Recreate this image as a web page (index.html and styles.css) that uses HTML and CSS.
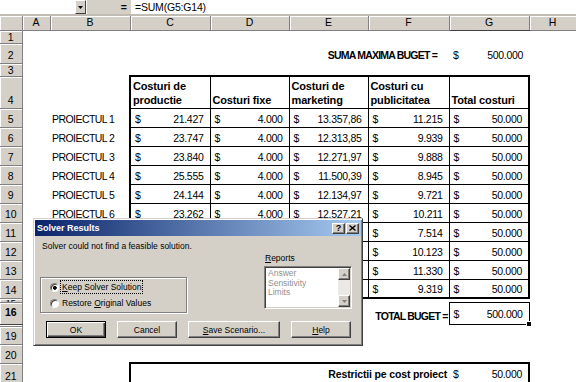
FILE: index.html
```html
<!DOCTYPE html>
<html lang="ro">
  <head>
    <meta charset="UTF-8" />
    <meta name="viewport" content="width=device-width" />
    <title>Buget proiecte - Solver Results</title>
    <link rel="stylesheet" href="styles.css">
  </head>
  <body>
    <!-- formula bar -->
    <div class="fbar">
      <div class="namebox"></div>
      <div class="drop">
        <svg width="5" height="3" viewBox="0 0 5 3"><polygon points="0,0 5,0 2.5,3" fill="#000" /></svg>
      </div>
      <div class="eq">=</div>
      <div class="formula">=SUM(G5:G14)</div>
    </div>

    <table class="sheet">
      <colgroup>
        <col class="w-rh" />
        <col class="w-a" />
        <col class="w-b" />
        <col class="w-c" />
        <col class="w-d" />
        <col class="w-e" />
        <col class="w-f" />
        <col class="w-g" />
        <col class="w-h" />
      </colgroup>
      <tr class="hdr">
        <td class="corner"></td>
        <td class="ch">A</td>
        <td class="ch">B</td>
        <td class="ch">C</td>
        <td class="ch">D</td>
        <td class="ch">E</td>
        <td class="ch">F</td>
        <td class="ch ch-sel">G</td>
        <td class="ch">H</td>
      </tr>
      <tr class="h13"><td class="rh">1</td><td colspan="8"></td></tr>
      <tr class="h20">
        <td class="rh">2</td>
        <td></td><td></td>
        <td colspan="4" class="caps right">SUMA MAXIMA BUGET =</td>
        <td><div class="acc"><span>$</span><span>500.000</span></div></td>
        <td></td>
      </tr>
      <tr class="h13"><td class="rh">3</td><td colspan="8"></td></tr>
      <tr class="h32">
        <td class="rh">4</td>
        <td></td><td></td>
        <td class="colh bt bl">Costuri de productie</td>
        <td class="colh bt">Costuri fixe</td>
        <td class="colh bt">Costuri de marketing</td>
        <td class="colh bt">Costuri cu publicitatea</td>
        <td class="colh bt br">Total costuri</td>
        <td></td>
      </tr>
    </table>

    <!-- rows 5..21 are added by the script below -->
    <script>
      // each project: production, fixed, marketing, publicity, total
      const projects = [
        ["21.427", "4.000", "13.357,86", "11.215", "50.000"],
        ["23.747", "4.000", "12.313,85", "9.939", "50.000"],
        ["23.840", "4.000", "12.271,97", "9.888", "50.000"],
        ["25.555", "4.000", "11.500,39", "8.945", "50.000"],
        ["24.144", "4.000", "12.134,97", "9.721", "50.000"],
        ["23.262", "4.000", "12.527,21", "10.211", "50.000"],
        ["26.113", "4.000", "12.373,00", "7.514", "50.000"],
        ["23.504", "4.000", "12.373,00", "10.123", "50.000"],
        ["22.297", "4.000", "12.373,00", "11.330", "50.000"],
        ["24.308", "4.000", "12.373,00", "9.319", "50.000"],
      ];

      const sheet = document.querySelector(".sheet");

      function acc(value) {
        return `<div class="acc"><span>$</span><span>${value}</span></div>`;
      }

      projects.forEach((row, i) => {
        const tr = document.createElement("tr");
        tr.className = "h19";
        const last = i === projects.length - 1 ? " bb" : "";
        tr.innerHTML = `
          <td class="rh">${i + 5}</td>
          <td></td>
          <td class="name">PROIECTUL ${i + 1}</td>
          <td class="box bl${last}">${acc(row[0])}</td>
          <td class="box${last}">${acc(row[1])}</td>
          <td class="box${last}">${acc(row[2])}</td>
          <td class="box${last}">${acc(row[3])}</td>
          <td class="box br${last}">${acc(row[4])}</td>
          <td></td>
        `;
        sheet.appendChild(tr);
      });

      sheet.insertAdjacentHTML("beforeend", `
        <tr class="h4"><td class="rh"><div class="clip">15</div></td><td colspan="8"></td></tr>
        <tr class="h22">
          <td class="rh rh-sel">16</td>
          <td></td><td></td><td></td><td></td><td></td>
          <td class="caps right tight">TOTAL BUGET =</td>
          <td class="sel"><div class="selwrap">${acc("500.000")}<span class="handle"></span></div></td>
          <td></td>
        </tr>
        <tr class="h2"><td class="rh"></td><td colspan="8"></td></tr>
        <tr class="h18"><td class="rh">19</td><td colspan="8"></td></tr>
        <tr class="h19"><td class="rh">20</td><td colspan="8"></td></tr>
        <tr class="h21">
          <td class="rh">21</td>
          <td></td><td></td>
          <td colspan="4" class="restr right">Restrictii pe cost proiect</td>
          <td class="restr-g">${acc("50.000")}</td>
          <td></td>
        </tr>
      `);
    </script>

    <!-- Solver dialog over the sheet -->
    <div class="dlg">
      <div class="titlebar">
        <span class="ttl">Solver Results</span>
        <span class="tbtn help">?</span>
        <span class="tbtn">
          <svg width="7" height="6" viewBox="0 0 7 6"><path d="M0.5 0.5 L6.5 5.5 M6.5 0.5 L0.5 5.5" stroke="#000" stroke-width="1.4" /></svg>
        </span>
      </div>
      <div class="dbody">
        <div class="msg">Solver could not find a feasible solution.</div>
        <div class="mid">
          <div class="group">
            <div class="opt"><span class="radio on"></span><span class="focus"><u>K</u>eep Solver Solution</span></div>
            <div class="opt"><span class="radio"></span><span>Restore <u>O</u>riginal Values</span></div>
          </div>
          <div class="reports">
            <div class="rlabel"><u>R</u>eports</div>
            <div class="list">
              <div class="items">
                <div>Answer</div>
                <div>Sensitivity</div>
                <div>Limits</div>
              </div>
              <div class="scroll">
                <span class="arr"><svg width="5" height="3" viewBox="0 0 5 3"><polygon points="2.5,0 5,3 0,3" fill="#808080" /></svg></span>
                <span class="arr"><svg width="5" height="3" viewBox="0 0 5 3"><polygon points="0,0 5,0 2.5,3" fill="#808080" /></svg></span>
              </div>
            </div>
          </div>
        </div>
        <div class="btns">
          <button class="btn def">OK</button>
          <button class="btn">Cancel</button>
          <button class="btn wide"><u>S</u>ave Scenario...</button>
          <button class="btn"><u>H</u>elp</button>
        </div>
      </div>
    </div>
  </body>
</html>
```

FILE: styles.css
```css
body {
  margin: 0;
  width: 576px;
  height: 382px;
  overflow: hidden;
  position: relative;
  background: #fff;
  font-family: "Liberation Sans", Arial, sans-serif;
  font-size: 10.5px;
  color: #000;
}

/* formula bar */
.fbar {
  display: flex;
  height: 14px;
  background: #d4d0c8;
  border-bottom: 2px solid #c0bcb4;
}

.namebox {
  width: 75px;
  background: #fff;
}

.drop {
  width: 11px;
  box-sizing: border-box;
  border: 1px solid;
  border-color: #fff #404040 #404040 #fff;
  display: flex;
  align-items: center;
  justify-content: center;
}

.eq {
  width: 45px;
  box-sizing: border-box;
  text-align: right;
  padding-right: 4px;
  font-weight: bold;
  line-height: 14px;
  border-left: 1px solid #fff;
}

.formula {
  flex: 1;
  background: #fff;
  padding-left: 4px;
  line-height: 14px;
  letter-spacing: -0.2px;
}

/* sheet */
.sheet {
  border-collapse: collapse;
  table-layout: fixed;
  width: 576px;
}

.w-rh { width: 22px; }
.w-a { width: 28px; }
.w-b { width: 80px; }
.w-c { width: 80px; }
.w-d { width: 79px; }
.w-e { width: 79px; }
.w-f { width: 81px; }
.w-g { width: 80px; }
.w-h { width: 47px; }

.sheet td {
  padding: 0 0 1px 0;
  white-space: nowrap;
  overflow: hidden;
  vertical-align: bottom;
  line-height: 13px;
  letter-spacing: -0.3px;
}

.hdr { height: 14px; }
.h2 { height: 2px; }
.h4 { height: 4px; }
.h13 { height: 13px; }
.h18 { height: 18px; }
.h19 { height: 19px; }
.h20 { height: 20px; }
.h21 { height: 21px; }
.h22 { height: 22px; }
.h32 { height: 32px; }

.sheet .h13 td {
  line-height: 12px;
  padding: 0;
}

.sheet .h2 td,
.sheet .h4 td {
  line-height: 0;
  padding: 0;
}

.sheet td.corner,
.sheet td.ch,
.sheet td.rh {
  background: #d4d0c8;
  border-right: 1px solid #808080;
  border-bottom: 1px solid #808080;
  box-shadow: inset 1px 1px 0 #fff;
  text-align: center;
  letter-spacing: 0;
}

.sheet td.ch {
  vertical-align: middle;
  padding: 0;
}

.sheet td.ch-sel {
  border-bottom-color: #404040;
}

.sheet td.rh-sel {
  font-weight: bold;
  vertical-align: middle;
  border-bottom: 1px solid #404040;
}

.clip {
  height: 3px;
  line-height: 8px;
  overflow: hidden;
  font-size: 9px;
}

.sheet td.name {
  padding-left: 2px;
  letter-spacing: -0.55px;
}

.right {
  text-align: right;
}

.sheet td.caps {
  font-weight: bold;
  letter-spacing: -0.8px;
  padding-right: 12px;
}

.sheet td.tight {
  padding-right: 1px;
}

.sheet td.colh {
  font-weight: bold;
  font-size: 11px;
  letter-spacing: -0.15px;
  white-space: normal;
  line-height: 14px;
  padding: 0 2px 1px 2px;
  border: 1px solid #000;
}

.sheet td.box {
  border: 1px solid #000;
}

.sheet td.bt { border-top: 2px solid #000; }
.sheet td.bl { border-left: 2px solid #000; }
.sheet td.br { border-right: 2px solid #000; }
.sheet td.bb { border-bottom: 2px solid #000; }

.acc {
  display: flex;
  justify-content: space-between;
  padding: 0 6px 0 4px;
}

.sheet td.sel {
  border: 1px solid #000;
  padding: 0;
  overflow: visible;
}

.selwrap {
  position: relative;
  padding-bottom: 3px;
}

.handle {
  position: absolute;
  right: -3px;
  bottom: -3px;
  width: 4px;
  height: 4px;
  background: #000;
  border: 1px solid #fff;
}

.sheet td.restr {
  border-top: 2px solid #000;
  border-left: 2px solid #000;
  font-weight: bold;
  letter-spacing: -0.15px;
  padding: 0 2px 3px 0;
}

.sheet td.restr-g {
  border-top: 2px solid #000;
  border-right: 2px solid #000;
  padding-bottom: 3px;
}

/* dialog */
.dlg {
  position: absolute;
  left: 33px;
  top: 218px;
  width: 330px;
  height: 128px;
  box-sizing: border-box;
  padding: 1px;
  background: #d4d0c8;
  border: 1px solid;
  border-color: #d4d0c8 #404040 #404040 #d4d0c8;
  box-shadow: inset 1px 1px 0 #fff, inset -1px -1px 0 #808080;
  font-size: 8.5px;
  line-height: 12px;
}

.titlebar {
  display: flex;
  align-items: center;
  height: 16px;
  padding-left: 2px;
  background: linear-gradient(to right, #0a246a, #a6caf0);
}

.ttl {
  flex: 1;
  color: #fff;
  font-weight: bold;
  font-size: 9px;
}

.tbtn {
  width: 13px;
  height: 11px;
  box-sizing: border-box;
  background: #d4d0c8;
  border: 1px solid;
  border-color: #fff #404040 #404040 #fff;
  box-shadow: inset -1px -1px 0 #808080;
  display: flex;
  align-items: center;
  justify-content: center;
  margin-right: 2px;
}

.tbtn.help {
  font-weight: bold;
  font-size: 9px;
  margin-right: 1px;
}

.dbody {
  padding: 0 9px 0 5px;
}

.msg {
  margin: 4px 0 0 2px;
}

.mid {
  display: flex;
  justify-content: space-between;
  align-items: flex-start;
}

.group {
  margin-top: 25px;
  width: 147px;
  height: 36px;
  box-sizing: border-box;
  padding: 3px 0 0 9px;
  border: 1px solid #808080;
  box-shadow: 1px 1px 0 #fff, inset 1px 1px 0 #fff;
  display: flex;
  flex-direction: column;
  gap: 4px;
}

.opt {
  display: flex;
  align-items: center;
  gap: 3px;
}

.radio {
  width: 9px;
  height: 9px;
  box-sizing: border-box;
  border-radius: 50%;
  background: #fff;
  border: 1px solid;
  border-color: #808080 #fff #fff #808080;
  box-shadow: inset 1px 1px 0 #404040;
}

.radio.on {
  background: radial-gradient(circle at 55% 55%, #000 1.6px, #fff 2.2px);
}

.focus {
  outline: 1px dotted #000;
  outline-offset: 0;
  padding: 0 1px;
  margin-left: -1px;
}

.reports {
  margin-top: 1px;
  width: 88px;
}

.rlabel {
  line-height: 10px;
  padding-left: 1px;
}

.list {
  display: flex;
  margin-top: 3px;
  height: 43px;
  box-sizing: border-box;
  background: #fff;
  border: 1px solid;
  border-color: #808080 #fff #fff #808080;
  box-shadow: inset 1px 1px 0 #404040, inset -1px -1px 0 #d4d0c8;
  padding: 1px;
}

.items {
  flex: 1;
  color: #909090;
  line-height: 9.5px;
  padding: 1px 0 0 2px;
}

.scroll {
  width: 12px;
  display: flex;
  flex-direction: column;
  justify-content: space-between;
  background: #ebe9e5;
}

.arr {
  height: 12px;
  box-sizing: border-box;
  background: #d4d0c8;
  border: 1px solid;
  border-color: #fff #404040 #404040 #fff;
  box-shadow: inset -1px -1px 0 #808080;
  display: flex;
  align-items: center;
  justify-content: center;
}

.btns {
  display: flex;
  gap: 11px;
  margin-top: 8px;
  padding-left: 6px;
}

.btn {
  width: 60px;
  height: 17px;
  box-sizing: border-box;
  padding: 0;
  font-family: "Liberation Sans", Arial, sans-serif;
  font-size: 8.5px;
  color: #000;
  background: #d4d0c8;
  border: 1px solid;
  border-color: #fff #404040 #404040 #fff;
  box-shadow: inset -1px -1px 0 #808080;
}

.btn.def {
  border-color: #000;
  box-shadow: inset 1px 1px 0 #fff, inset -1px -1px 0 #404040, inset -2px -2px 0 #808080;
}

.btn.wide {
  width: 92px;
}
```
